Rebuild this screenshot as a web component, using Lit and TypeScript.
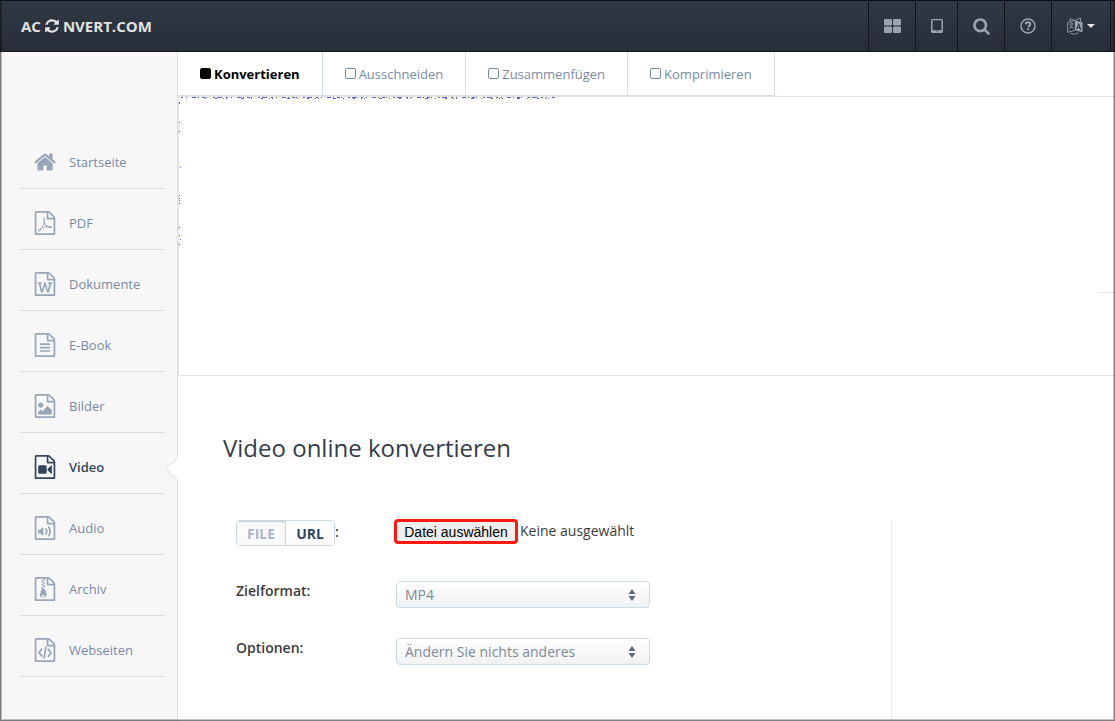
import { LitElement, html, css, svg } from "lit";
import { customElement, property, state } from "lit/decorators.js";
import { classMap } from "lit/directives/class-map.js";

const SHEET =
  "M1468 380q28 28 48 76t20 88v1152q0 40-28 68t-68 28H96q-40 0-68-28t-28-68V96q0-40 28-68T96 0h896q40 0 88 20t76 48zm-444-244v376h376q-10-29-22-41l-313-313q-12-12-41-22zm384 1528V640H992q-40 0-68-28t-28-68V128H128v1536h1280z";

const GLYPHS: Record<string, string> = {
  pdf: "M894 1071q33 26 84 56 59-7 117-7 147 0 177 49 16 22 2 52 0 1-1 2l-2 2v1q-6 38-71 38-48 0-115-20t-130-53q-221 24-392 83-153 262-242 262-15 0-28-7l-24-12q-1-1-6-5-10-10-6-36 9-40 56-91.500t132-96.500q14-9 23 6 2 2 2 4 52-85 107-197 68-136 104-262-24-82-30.500-159.500T657 552q11-40 42-40h22q23 0 35 15 18 21 9 68-2 6-4 8 1 3 1 8v30q-2 123-14 192 55 164 146 238zM318 1482q52-24 137-158-51 40-87.500 84t-49.500 74zM716 562q-15 42-2 132 1-7 7-44 0-3 7-43 1-4 4-8-1-1-1-2t-1-2q-1-22-13-36 0 1-1 2zM592 1223q135-54 284-81-2-1-13-9.500t-16-13.500q-76-67-127-176-27 86-83 197-30 56-45 83zm646-16q-24-24-140-24 76 28 124 28 14 0 18-1 0-1-2-3z",
  doc: "M233 768v107h70l164 661h159l128-485q7-20 10-46 2-16 2-24h4l3 24q1 3 3.500 20t5.500 26l128 485h159l164-661h70V768h-300v107h90l-99 438q-5 20-7 46l-2 21h-4l-3-21q-1-5-4-21t-5-25L825 768H711l-144 545q-2 9-4.500 24.500T559 1359l-4 21h-4l-2-21q-2-26-7-46l-99-438h90V768H233z",
  book: "M384 800q0-14 9-23t23-9h704q14 0 23 9t9 23v64q0 14-9 23t-23 9H416q-14 0-23-9t-9-23v-64zM1120 1024q14 0 23 9t9 23v64q0 14-9 23t-23 9H416q-14 0-23-9t-9-23v-64q0-14 9-23t23-9h704zM1120 1280q14 0 23 9t9 23v64q0 14-9 23t-23 9H416q-14 0-23-9t-9-23v-64q0-14 9-23t23-9h704z",
  image:
    "M1280 1216v320H256v-192l192-192 128 128 384-384zM448 1024q-80 0-136-56t-56-136 56-136 136-56 136 56 56 136-56 136-136 56z",
  video:
    "M768 768q52 0 90 38t38 90v384q0 52-38 90t-90 38H384q-52 0-90-38t-38-90V896q0-52 38-90t90-38h384zM1260 770q20 8 20 30v576q0 22-20 30-8 2-12 2-14 0-23-9l-265-266v-90l265-266q9-9 23-9 4 0 12 2z",
  audio:
    "M620 850q20 8 20 30v544q0 22-20 30-8 2-12 2-12 0-23-9l-166-167H288q-14 0-23-9t-9-23v-192q0-14 9-23t23-9h131l166-167q16-15 35-7zM1037 1539q31 0 50-24 129-159 129-363t-129-363q-16-21-43-24t-47 14q-21 17-23.500 43.500T988 870q100 123 100 282t-100 282q-17 21-14.500 47.500t23.500 42.500q18 15 40 15zM826 1391q27 0 47-20 87-93 87-219t-87-219q-18-19-45-20t-46 17-20 44.500 18 46.500q52 57 52 131t-52 131q-19 20-18 46.500t20 44.500q20 17 44 17z",
  zip: "M512 256h128v128H512zM640 128h128v128H640zM640 384h128v128H640zM512 512h128v128H512zM640 640h128v128H640zM781 943l107 349q8 27 8 52 0 83-72.500 137.500T640 1536t-183.500-54.500T384 1344q0-25 8-52 21-63 120-396V768h128v128h79q22 0 39 13t23 34zM640 1472q53 0 90.500-19t37.500-45-37.500-45-90.500-19-90.500 19-37.500 45 37.500 45 90.500 19z",
  code: "M480 768q8-11 21-12.500t24 6.500l51 38q11 8 12.500 21t-6.500 24l-182 243 182 243q8 11 6.500 24t-12.500 21l-51 38q-11 8-24 6.500t-21-12.500L254 1126q-14-19 0-38zM1282 1088q14 19 0 38l-226 301q-8 11-21 12.500t-24-6.500l-51-38q-11-8-12.500-21t6.500-24l182-243-182-243q-8-11-6.500-24t12.500-21l51-38q11-8 24-6.500t21 12.500zM662 1530q-13-2-20.500-13t-5.500-24l138-831q2-13 13-20.500t24-5.500l63 10q13 2 20.500 13t5.500 24l-138 831q-2 13-13 20.500t-24 5.500z",
};

const HOME =
  "M1408 992v480q0 26-19 45t-45 19H960v-384H704v384H320q-26 0-45-19t-19-45V992q0-1 .5-3t.5-3l575-474 575 474q1 2 1 6zm223-69l-62 74q-8 9-21 11h-3q-13 0-21-7L832 424 140 1001q-12 8-24 7-13-2-21-11l-62-74q-8-10-7-23.500t11-21.500l719-599q32-26 76-26t76 26l244 204V288q0-14 9-23t23-9h192q14 0 23 9t9 23v408l219 182q10 8 11 21.500t-7 23.500z";
const REFRESH =
  "M1511 1056q0 5-1 7-64 268-268 434.500T764 1664q-146 0-282.500-55T238 1452l-129 129q-19 19-45 19t-45-19-19-45v-448q0-26 19-45t45-19h448q26 0 45 19t19 45-19 45l-137 137q71 66 161 102t187 36q134 0 250-65t186-179q11-17 53-117 8-23 30-23h192q13 0 22.500 9.500t9.500 22.500zm25-800v448q0 26-19 45t-45 19h-448q-26 0-45-19t-19-45 19-45l138-138Q969 384 768 384q-134 0-250 65T332 628q-11 17-53 117-8 23-30 23H50q-13 0-22.500-9.500T18 736v-7q65-268 270-434.500T768 128q146 0 284 55.500T1297 340l130-129q19-19 45-19t45 19 19 45z";
const SEARCH =
  "M1152 832q0-185-131.500-316.500T704 384 387.500 515.500 256 832t131.500 316.500T704 1280t316.500-131.500T1152 832zm512 832q0 52-38 90t-90 38q-54 0-90-38l-343-342q-179 124-399 124-143 0-273.500-55.500t-225-150-150-225T0 832t55.500-273.500 150-225 225-150T704 128t273.500 55.500 225 150 150 225T1408 832q0 220-124 399l343 343q37 37 37 90z";

@customElement("site-header")
class SiteHeader extends LitElement {
  static styles = css`
    :host {
      display: flex;
      justify-content: space-between;
      box-sizing: border-box;
      height: 52px;
      padding: 0 4px 0 21px;
      background: linear-gradient(#2f3944, #282d3a);
      border-bottom: 1px solid #14181f;
    }
    .logo {
      display: flex;
      align-items: center;
      gap: 4px;
      color: #e2e2e2;
      font-size: 15px;
      font-weight: 700;
      text-decoration: none;
    }
    .tools {
      display: flex;
      border-right: 1px solid #12161c;
    }
    button {
      display: flex;
      align-items: center;
      justify-content: center;
      gap: 4px;
      width: 47px;
      padding: 0;
      border: 0;
      border-left: 1px solid #12161c;
      background: none;
      color: #9aa3ae;
    }
    .narrow {
      width: 42px;
    }
    .wide {
      width: 59px;
    }
    svg {
      display: block;
      fill: currentColor;
    }
    .caret {
      fill: #e2e2e2;
    }
  `;

  render() {
    return html`
      <a class="logo" href="#"
        ><span>AC</span
        ><svg width="14" height="16" viewBox="0 0 1536 1792"><path d=${REFRESH} /></svg
        ><span>NVERT.COM</span></a
      >
      <div class="tools">
        <button aria-label="Apps">
          <svg width="17" height="14" viewBox="0 0 17 14">
            <rect width="8" height="6.500" rx="1.300" />
            <rect x="9" width="8" height="6.500" rx="1.300" />
            <rect y="7.500" width="8" height="6.500" rx="1.300" />
            <rect x="9" y="7.500" width="8" height="6.500" rx="1.300" />
          </svg>
        </button>
        <button class="narrow" aria-label="Mobil">
          <svg width="12" height="14" viewBox="0 0 12 14">
            <path
              fill-rule="evenodd"
              d="M1.500 0h9A1.500 1.500 0 0 1 12 1.500v11a1.500 1.500 0 0 1-1.500 1.500h-9A1.500 1.500 0 0 1 0 12.500v-11A1.500 1.500 0 0 1 1.500 0zM1.500 1.200v10h9v-10zM5.500 12.200h1v.8h-1z"
            />
          </svg>
        </button>
        <button aria-label="Suche">
          <svg width="17" height="18" viewBox="0 0 1664 1792"><path d=${SEARCH} /></svg>
        </button>
        <button aria-label="Hilfe">
          <svg width="16" height="16" viewBox="0 0 16 16">
            <circle cx="8" cy="8" r="7" fill="none" stroke="currentColor" stroke-width="1.500" />
            <path
              d="M5.700 6.300C5.900 4.800 6.800 4.300 8 4.300c1.300 0 2.300.8 2.300 1.900 0 1.500-2 1.500-2.100 3.100"
              fill="none"
              stroke="currentColor"
              stroke-width="1.900"
            />
            <rect x="7.100" y="10.300" width="2" height="2" />
          </svg>
        </button>
        <button class="wide" aria-label="Sprache">
          <svg width="16" height="18" viewBox="0 0 16 18">
            <path
              fill-rule="evenodd"
              d="M7.800 3.400 15.500 5.200v10L7.800 13.300zM11.300 6.400 9.200 12l1.100.3.500-1.300 1.900.5.500 1.500 1.100.3-2-6.600zm.4 1.500.6 2.500-1.300-.3z"
            />
            <path
              d="M7.800 3.400.6 5.500v9.800l7.200-2M3 1.800l5 1.600 5.500-2.400v3.500M3 1.800v3M3.500 16.300c2.500 1.200 5.500 1 7.800-.6M2.300 7.400l4-1M4 5.700l.3 1.300M5.300 6.900C5 9.300 3.800 11 2.300 12M3 8.600c1 1 2.200 1.800 3.500 2.400"
              fill="none"
              stroke="currentColor"
              stroke-width="0.900"
            />
          </svg>
          <svg class="caret" width="8" height="4" viewBox="0 0 8 4"><path d="M0 0h8L4 4z" /></svg>
        </button>
      </div>
    `;
  }
}

@customElement("side-nav")
class SideNav extends LitElement {
  @property() active = "Video";

  items = [
    ["Startseite", "home"],
    ["PDF", "pdf"],
    ["Dokumente", "doc"],
    ["E-Book", "book"],
    ["Bilder", "image"],
    ["Video", "video"],
    ["Audio", "audio"],
    ["Archiv", "zip"],
    ["Webseiten", "code"],
  ];

  static styles = css`
    :host {
      display: block;
      box-sizing: border-box;
      width: 178px;
      flex: none;
      padding: 76px 12px 40px 20px;
      background: #f7f7f7;
      border-right: 1px solid #dbe1e8;
    }
    ul {
      margin: 0;
      padding: 0;
      list-style: none;
    }
    li {
      position: relative;
      border-bottom: 1px solid #d5dfe9;
    }
    a {
      display: grid;
      grid-template-columns: 22px auto;
      column-gap: 13px;
      align-items: center;
      height: 60px;
      padding: 8px 0 0 14px;
      box-sizing: border-box;
      color: #788ba3;
      font-size: 13px;
      text-decoration: none;
    }
    .icon {
      display: block;
      fill: #98a6ba;
    }
    .active a {
      color: #34465c;
      font-weight: 600;
    }
    .active .icon {
      fill: #34465c;
    }
    .notch {
      position: absolute;
      right: -13px;
      top: 24px;
    }
  `;

  render() {
    return html`<nav>
      <ul>
        ${this.items.map(([label, icon]) => {
          const active = label === this.active;
          return html`<li class=${classMap({ active })}>
            <a href="#">
              <svg
                class="icon"
                width="22"
                height="24"
                viewBox=${icon === "home" ? "0 0 1664 1792" : "0 0 1536 1792"}
              >
                ${icon === "home"
                  ? svg`<path d=${HOME} />`
                  : svg`<path d=${SHEET} /><path d=${GLYPHS[icon]} />`}
              </svg>
              <span>${label}</span>
            </a>
            ${active
              ? html`<svg class="notch" width="13" height="24" viewBox="0 0 13 24">
                  <path d="M13 0 12.500.5 1 12l11.500 11.500.5.500z" fill="#fff" />
                  <path d="M12.500.5 1 12l11.500 11.500" fill="none" stroke="#d5e0e7" />
                </svg>`
              : ""}
          </li>`;
        })}
      </ul>
    </nav>`;
  }
}

@customElement("tab-strip")
class TabStrip extends LitElement {
  @state() current = "Konvertieren";

  static styles = css`
    :host {
      display: flex;
      height: 44px;
      border-bottom: 1px solid #e0e2e5;
    }
    a {
      display: flex;
      align-items: center;
      gap: 3px;
      box-sizing: border-box;
      padding: 0 22px;
      border-right: 1px solid #d9dfe8;
      border-bottom: 1px solid #d9dfe8;
      color: #788ba3;
      font-size: 13px;
      text-decoration: none;
    }
    .box {
      box-sizing: border-box;
      width: 11px;
      height: 11px;
      border: 1px solid currentColor;
      border-radius: 2px;
    }
    .current {
      color: #000;
      font-weight: 700;
    }
    .current .box {
      background: currentColor;
    }
  `;

  render() {
    return ["Konvertieren", "Ausschneiden", "Zusammenfügen", "Komprimieren"].map(
      (name) => html`<a
        href="#"
        class=${classMap({ current: name === this.current })}
        @click=${() => (this.current = name)}
        ><span class="box"></span><span>${name}</span></a
      >`
    );
  }
}

@customElement("convert-form")
class ConvertForm extends LitElement {
  @state() source = "URL";

  static styles = css`
    :host {
      display: block;
      color: #3c3c3c;
      font-size: 14px;
    }
    form {
      display: grid;
      grid-template-columns: 160px 254px;
      row-gap: 30px;
      margin: 0;
    }
    .source {
      display: flex;
      height: 27px;
      margin-bottom: 4px;
    }
    .toggle {
      display: flex;
      box-sizing: border-box;
      height: 26px;
      border: 1px solid #cbdae7;
      border-radius: 4px;
      overflow: hidden;
    }
    .toggle button {
      width: 48px;
      padding: 0;
      border: 0;
      background: linear-gradient(#fff, #fafafa);
      color: #34465c;
      font: 700 14px "Open Sans", sans-serif;
    }
    .toggle .off {
      width: 49px;
      border-right: 1px solid #cbdae7;
      background: #fafafa;
      box-shadow: inset 0 1px 1px #c8cacc;
      color: #a9b6c8;
    }
    .colon,
    label {
      font-weight: 600;
    }
    .colon {
      line-height: 24px;
    }
    label {
      line-height: 20px;
    }
    .file {
      display: flex;
      align-items: flex-start;
      gap: 4px;
      padding-top: 1px;
      line-height: 20px;
      white-space: nowrap;
    }
    .pick {
      width: 120px;
      height: 21px;
      padding: 0;
      border: 0;
      background: #efefef;
      outline: 3px solid #fb1b12;
      outline-offset: -1px;
      border-radius: 2px;
      color: #000;
      font: 14px "Liberation Sans", Arial, sans-serif;
    }
    .select {
      display: grid;
      align-items: center;
    }
    select,
    .arrows {
      grid-area: 1 / 1;
    }
    select {
      appearance: none;
      box-sizing: border-box;
      width: 100%;
      height: 27px;
      padding: 0 28px 0 8px;
      border: 1px solid #cbdae7;
      border-radius: 4px;
      background: linear-gradient(#fff, #f0f1f2);
      color: #7e8997;
      font: 14px "Open Sans", sans-serif;
    }
    .arrows {
      justify-self: end;
      margin-right: 14px;
      pointer-events: none;
      fill: #5d6878;
    }
  `;

  pick(id: string, value: string) {
    return html`<div class="select">
      <select id=${id}>
        <option>${value}</option>
      </select>
      <svg class="arrows" width="8" height="14" viewBox="0 0 8 14">
        <path d="M4 1l3.500 5h-7zM4 13l3.500-5h-7z" />
      </svg>
    </div>`;
  }

  render() {
    return html`<form>
      <div class="source">
        <div class="toggle">
          ${["FILE", "URL"].map(
            (s) => html`<button
              type="button"
              class=${classMap({ off: s !== this.source })}
              @click=${() => (this.source = s)}
            >
              ${s}
            </button>`
          )}
        </div>
        <span class="colon">:</span>
      </div>
      <div class="file">
        <button type="button" class="pick">Datei auswählen</button>
        <span>Keine ausgewählt</span>
      </div>
      <label for="format">Zielformat:</label>
      ${this.pick("format", "MP4")}
      <label for="options">Optionen:</label>
      ${this.pick("options", "Ändern Sie nichts anderes")}
    </form>`;
  }
}

@customElement("app-root")
class AppRoot extends LitElement {
  static styles = css`
    :host {
      display: flex;
      flex-direction: column;
      min-height: 100vh;
      background: #fff;
      font-family: "Open Sans", sans-serif;
    }
    :host::after {
      content: "";
      position: fixed;
      inset: 0;
      border: 1px solid #808080;
      border-top-color: #444;
      box-shadow: inset -1px -1px #c4c4c4, inset 1px 0 #c4c4c4;
      mix-blend-mode: multiply;
      pointer-events: none;
    }
    .body {
      display: flex;
      flex: 1;
    }
    main {
      display: flex;
      flex-direction: column;
      flex: 1;
      min-width: 0;
    }
    .banner {
      display: flex;
      justify-content: space-between;
      box-sizing: border-box;
      height: 279px;
      border-left: 1px solid #e3e6e9;
      border-bottom: 1px solid #e1e3e5;
    }
    .specks {
      display: block;
      fill: none;
      stroke: #5b63d0;
    }
    .rule {
      width: 16px;
      height: 1px;
      margin-top: 195px;
      background: #e6e6e6;
    }
    h1 {
      margin: 0;
      padding: 56px 45px 0;
      color: #343d4a;
      font-size: 24px;
      font-weight: 400;
      line-height: 32px;
    }
    .content {
      display: flex;
      flex: 1;
      margin-top: 56px;
    }
    convert-form {
      flex: 1;
      padding: 0 0 40px 58px;
    }
    aside {
      box-sizing: border-box;
      width: 224px;
      border-left: 1px solid #ececec;
    }
  `;

  render() {
    return html`
      <site-header></site-header>
      <div class="body">
        <side-nav></side-nav>
        <main>
          <tab-strip></tab-strip>
          <div class="banner">
            <svg class="specks" width="380" height="160" viewBox="0 0 380 160">
              <path d="M2 .5H376" stroke-dasharray="2 3 1 5 4 2 1 3 3 1 1 6 2 2 5 4" />
              <path d="M26 1.500H370" stroke-dasharray="1 9 2 6 1 2 1 14 3 7" />
              <path
                d="M.5 5v2M.5 25v1M.5 34v1M1.500 70v1M.5 98v1M.5 101v1M.5 103v1M.5 106v1M.5 130v1M.5 138v1M1.500 142v1M.5 147v1"
              />
            </svg>
            <span class="rule"></span>
          </div>
          <h1>Video online konvertieren</h1>
          <div class="content">
            <convert-form></convert-form>
            <aside></aside>
          </div>
        </main>
      </div>
    `;
  }
}
